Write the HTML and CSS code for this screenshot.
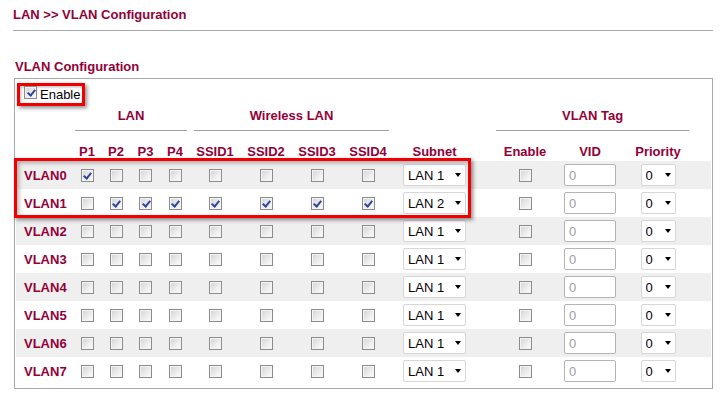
FILE: index.html
```html
<!DOCTYPE html>
<html>
<head>
<meta charset="utf-8">
<link rel="stylesheet" href="styles.css">
</head>
<body>
<div class="page-title">LAN &gt;&gt; VLAN Configuration</div>
<div class="section-title">VLAN Configuration</div>
<div class="panel">
  <div class="enable-row">
    <label class="enable-box"><input type="checkbox" class="cb" checked><span>Enable</span></label>
  </div>
  <table class="vlan">
    <colgroup>
      <col class="c-label"><col class="c-p1"><col class="c-p2"><col class="c-p3"><col class="c-p4">
      <col class="c-s1"><col class="c-s2"><col class="c-s3"><col class="c-s4">
      <col class="c-subnet"><col class="c-gap"><col class="c-en"><col class="c-vid"><col class="c-pri"><col class="c-gap">
    </colgroup>
    <thead>
      <tr class="group-row">
        <th></th>
        <th colspan="4"><div class="grp grp-lan">LAN</div></th>
        <th colspan="4"><div class="grp grp-wl">Wireless LAN</div></th>
        <th></th><th></th>
        <th colspan="3"><div class="grp grp-tag">VLAN Tag</div></th>
        <th></th>
      </tr>
      <tr class="col-row">
        <th></th><th>P1</th><th>P2</th><th>P3</th><th>P4</th>
        <th>SSID1</th><th>SSID2</th><th>SSID3</th><th>SSID4</th>
        <th>Subnet</th><th></th><th>Enable</th><th>VID</th><th>Priority</th><th></th>
      </tr>
    </thead>
    <tbody>
      <tr>
        <th class="rl">VLAN0</th>
        <td><input type="checkbox" class="cb" checked></td><td><input type="checkbox" class="cb"></td><td><input type="checkbox" class="cb"></td><td><input type="checkbox" class="cb"></td>
        <td><input type="checkbox" class="cb"></td><td><input type="checkbox" class="cb"></td><td><input type="checkbox" class="cb"></td><td><input type="checkbox" class="cb"></td>
        <td><div class="sel sel-subnet"><select><option>LAN 1</option></select><span class="caret"></span></div></td><td></td>
        <td><input type="checkbox" class="cb"></td>
        <td><input type="text" class="vid" value="0"></td>
        <td><div class="sel sel-pri"><select><option>0</option></select><span class="caret"></span></div></td><td></td>
      </tr>
      <tr>
        <th class="rl">VLAN1</th>
        <td><input type="checkbox" class="cb"></td><td><input type="checkbox" class="cb" checked></td><td><input type="checkbox" class="cb" checked></td><td><input type="checkbox" class="cb" checked></td>
        <td><input type="checkbox" class="cb" checked></td><td><input type="checkbox" class="cb" checked></td><td><input type="checkbox" class="cb" checked></td><td><input type="checkbox" class="cb" checked></td>
        <td><div class="sel sel-subnet"><select><option>LAN 2</option></select><span class="caret"></span></div></td><td></td>
        <td><input type="checkbox" class="cb"></td>
        <td><input type="text" class="vid" value="0"></td>
        <td><div class="sel sel-pri"><select><option>0</option></select><span class="caret"></span></div></td><td></td>
      </tr>
      <tr>
        <th class="rl">VLAN2</th>
        <td><input type="checkbox" class="cb"></td><td><input type="checkbox" class="cb"></td><td><input type="checkbox" class="cb"></td><td><input type="checkbox" class="cb"></td>
        <td><input type="checkbox" class="cb"></td><td><input type="checkbox" class="cb"></td><td><input type="checkbox" class="cb"></td><td><input type="checkbox" class="cb"></td>
        <td><div class="sel sel-subnet"><select><option>LAN 1</option></select><span class="caret"></span></div></td><td></td>
        <td><input type="checkbox" class="cb"></td>
        <td><input type="text" class="vid" value="0"></td>
        <td><div class="sel sel-pri"><select><option>0</option></select><span class="caret"></span></div></td><td></td>
      </tr>
      <tr>
        <th class="rl">VLAN3</th>
        <td><input type="checkbox" class="cb"></td><td><input type="checkbox" class="cb"></td><td><input type="checkbox" class="cb"></td><td><input type="checkbox" class="cb"></td>
        <td><input type="checkbox" class="cb"></td><td><input type="checkbox" class="cb"></td><td><input type="checkbox" class="cb"></td><td><input type="checkbox" class="cb"></td>
        <td><div class="sel sel-subnet"><select><option>LAN 1</option></select><span class="caret"></span></div></td><td></td>
        <td><input type="checkbox" class="cb"></td>
        <td><input type="text" class="vid" value="0"></td>
        <td><div class="sel sel-pri"><select><option>0</option></select><span class="caret"></span></div></td><td></td>
      </tr>
      <tr>
        <th class="rl">VLAN4</th>
        <td><input type="checkbox" class="cb"></td><td><input type="checkbox" class="cb"></td><td><input type="checkbox" class="cb"></td><td><input type="checkbox" class="cb"></td>
        <td><input type="checkbox" class="cb"></td><td><input type="checkbox" class="cb"></td><td><input type="checkbox" class="cb"></td><td><input type="checkbox" class="cb"></td>
        <td><div class="sel sel-subnet"><select><option>LAN 1</option></select><span class="caret"></span></div></td><td></td>
        <td><input type="checkbox" class="cb"></td>
        <td><input type="text" class="vid" value="0"></td>
        <td><div class="sel sel-pri"><select><option>0</option></select><span class="caret"></span></div></td><td></td>
      </tr>
      <tr>
        <th class="rl">VLAN5</th>
        <td><input type="checkbox" class="cb"></td><td><input type="checkbox" class="cb"></td><td><input type="checkbox" class="cb"></td><td><input type="checkbox" class="cb"></td>
        <td><input type="checkbox" class="cb"></td><td><input type="checkbox" class="cb"></td><td><input type="checkbox" class="cb"></td><td><input type="checkbox" class="cb"></td>
        <td><div class="sel sel-subnet"><select><option>LAN 1</option></select><span class="caret"></span></div></td><td></td>
        <td><input type="checkbox" class="cb"></td>
        <td><input type="text" class="vid" value="0"></td>
        <td><div class="sel sel-pri"><select><option>0</option></select><span class="caret"></span></div></td><td></td>
      </tr>
      <tr>
        <th class="rl">VLAN6</th>
        <td><input type="checkbox" class="cb"></td><td><input type="checkbox" class="cb"></td><td><input type="checkbox" class="cb"></td><td><input type="checkbox" class="cb"></td>
        <td><input type="checkbox" class="cb"></td><td><input type="checkbox" class="cb"></td><td><input type="checkbox" class="cb"></td><td><input type="checkbox" class="cb"></td>
        <td><div class="sel sel-subnet"><select><option>LAN 1</option></select><span class="caret"></span></div></td><td></td>
        <td><input type="checkbox" class="cb"></td>
        <td><input type="text" class="vid" value="0"></td>
        <td><div class="sel sel-pri"><select><option>0</option></select><span class="caret"></span></div></td><td></td>
      </tr>
      <tr>
        <th class="rl">VLAN7</th>
        <td><input type="checkbox" class="cb"></td><td><input type="checkbox" class="cb"></td><td><input type="checkbox" class="cb"></td><td><input type="checkbox" class="cb"></td>
        <td><input type="checkbox" class="cb"></td><td><input type="checkbox" class="cb"></td><td><input type="checkbox" class="cb"></td><td><input type="checkbox" class="cb"></td>
        <td><div class="sel sel-subnet"><select><option>LAN 1</option></select><span class="caret"></span></div></td><td></td>
        <td><input type="checkbox" class="cb"></td>
        <td><input type="text" class="vid" value="0"></td>
        <td><div class="sel sel-pri"><select><option>0</option></select><span class="caret"></span></div></td><td></td>
      </tr>
    </tbody>
  </table>
  <div class="highlight"></div>
</div>
</body>
</html>
```
FILE: styles.css
```css
html, body {
  margin: 0;
  background: #fff;
  font-family: "Liberation Sans", Arial, sans-serif;
  font-size: 13px;
}

.page-title {
  margin: 0 12px 0 13px;
  padding: 7px 0 7px;
  line-height: 16px;
  font-weight: bold;
  color: #930037;
  border-bottom: 1px solid #a8a8a8;
}

.section-title {
  margin: 28px 0 3px 15px;
  line-height: 16px;
  font-weight: bold;
  color: #930037;
}

.panel {
  position: relative;
  margin-left: 14px;
  width: 699px;
  box-sizing: border-box;
  border: 1px solid #a8a8a8;
  padding: 0 1px 3px;
}

.enable-row {
  height: 29px;
  box-sizing: border-box;
  padding: 4px 0 0 1px;
}

.enable-box {
  display: inline-flex;
  align-items: flex-start;
  gap: 3px;
  height: 23px;
  box-sizing: border-box;
  padding: 0 2px 0 4px;
  border: 3px solid #f00000;
  box-shadow: 2px 2px 4px rgba(0, 0, 0, 0.45), inset 1px 1px 3px rgba(0, 0, 0, 0.3);
  line-height: 17px;
  color: #000;
}

.cb {
  appearance: none;
  -webkit-appearance: none;
  display: block;
  position: relative;
  width: 13px;
  height: 13px;
  margin: 0 auto;
  box-sizing: border-box;
  border: 1px solid #8c8c8c;
  background: linear-gradient(135deg, #d2d2d2 0%, #eeeeee 60%, #fbfbfb 100%);
  box-shadow: inset 0 0 0 1px #f4f4f4;
}

.enable-box .cb {
  margin: 0;
}

.cb:checked::after {
  content: "";
  position: absolute;
  left: 3.5px;
  top: 1px;
  width: 3px;
  height: 6px;
  border-right: 2px solid #2c469c;
  border-bottom: 2px solid #2c469c;
  transform: rotate(40deg);
}

.vlan {
  width: 695px;
  table-layout: fixed;
  border-collapse: collapse;
  border-spacing: 0;
}

.c-label { width: 57px; }
.c-p1 { width: 28px; }
.c-p2 { width: 30px; }
.c-p3 { width: 29px; }
.c-p4 { width: 30px; }
.c-s1 { width: 50px; }
.c-s2 { width: 52px; }
.c-s3 { width: 50px; }
.c-s4 { width: 52px; }
.c-subnet { width: 81px; }
.c-gap { width: 20px; }
.c-en { width: 60px; }
.c-vid { width: 70px; }
.c-pri { width: 66px; }

.vlan th,
.vlan td {
  padding: 0;
  text-align: center;
  vertical-align: middle;
}

.vlan thead th {
  font-weight: bold;
  color: #930037;
  line-height: 15px;
}

.group-row th {
  vertical-align: top;
}

.grp {
  line-height: 15px;
  padding-bottom: 7px;
  border-bottom: 1px solid #a0a0a0;
}

.grp-lan { margin: 0 3px 0 2px; }
.grp-wl { margin: 0 5px 0 4px; }
.grp-tag { margin: 0 2px 0 1px; }

.col-row th {
  height: 30px;
  vertical-align: bottom;
  padding-bottom: 2px;
  box-sizing: border-box;
}

.vlan tbody tr {
  height: 28px;
}

.vlan tbody tr:nth-child(odd) {
  background: #efefef;
}

.vlan th.rl {
  text-align: left;
  padding-left: 8px;
  font-weight: bold;
  color: #930037;
}

.sel {
  display: flex;
  align-items: center;
  height: 22px;
  margin: 0 auto;
  box-sizing: border-box;
  border: 1px solid #d6d6d6;
  border-radius: 2px;
  background: #fff;
  padding: 0 4px;
}

.sel-subnet { width: 63px; }
.sel-pri { width: 35px; }

.sel select {
  appearance: none;
  -webkit-appearance: none;
  flex: 1;
  min-width: 0;
  border: 0;
  padding: 0;
  margin: 0;
  background: transparent;
  font-family: "Liberation Sans", Arial, sans-serif;
  font-size: 13px;
  color: #000;
  outline: none;
}

.caret {
  width: 0;
  height: 0;
  border-left: 3.5px solid transparent;
  border-right: 3.5px solid transparent;
  border-top: 4px solid #000;
}

.vid {
  display: block;
  width: 52px;
  height: 22px;
  margin: 0 auto;
  box-sizing: border-box;
  border: 1px solid #b4b4b4;
  border-radius: 2px;
  padding: 0 4px;
  font-family: "Liberation Sans", Arial, sans-serif;
  font-size: 13px;
  color: #a0a0a0;
  background: #fff;
}

.highlight {
  position: absolute;
  left: -1px;
  top: 79px;
  width: 457px;
  height: 60px;
  box-sizing: border-box;
  border: 3px solid #f00000;
  box-shadow: 2px 2px 4px rgba(0, 0, 0, 0.45), inset 2px 2px 4px rgba(0, 0, 0, 0.3);
  pointer-events: none;
}
```
